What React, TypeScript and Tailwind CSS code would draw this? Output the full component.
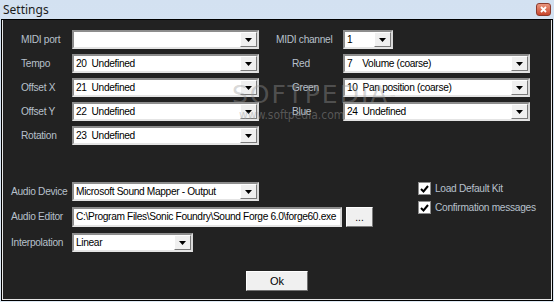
import React from 'react';

const font = { fontFamily: '"Liberation Sans", Arial, sans-serif' };

const Arrow = () => (
  <svg width="7" height="4" viewBox="0 0 7 4">
    <path d="M0 0h7L3.5 4z" fill="#000" />
  </svg>
);

const DropBtn = () => (
  <div className="w-[17px] h-full flex items-center justify-center bg-[#f0f0f0] border border-t-white border-l-white border-r-[#7a7a7a] border-b-[#7a7a7a]">
    <Arrow />
  </div>
);

const Combo = ({ w, value }: { w: string; value: string }) => (
  <div className={`${w} h-[19px] flex bg-white border-2 border-t-[#8d8d8d] border-l-[#8d8d8d] border-r-[#d8d8d8] border-b-[#e4e4e4]`}>
    <div className="flex-1 pl-[2px] text-[10.2px] tracking-[-0.35px] leading-[15px] text-black whitespace-pre">{value}</div>
    <DropBtn />
  </div>
);

const Label = ({ w, children, indent }: { w: string; children: React.ReactNode; indent?: string }) => (
  <div className={`${w} ${indent ?? ''} text-[10.2px] tracking-[-0.3px] text-[#b7c0cb] whitespace-nowrap`}>{children}</div>
);

const Check = ({ label }: { label: string }) => (
  <div className="flex items-center gap-[4px] h-[13px]">
    <div className="w-[13px] h-[13px] bg-white border border-[#8d8d8d] flex items-center justify-center">
      <svg width="9" height="8" viewBox="0 0 9 8">
        <path d="M1 4l2.5 2.5L8 1" stroke="#000" strokeWidth="2" fill="none" />
      </svg>
    </div>
    <span className="text-[10.2px] tracking-[-0.3px] text-[#b7c0cb]">{label}</span>
  </div>
);

const rows: [string, string, string, string][] = [
  ['MIDI port', '', 'MIDI channel', '1'],
  ['Tempo', '20  Undefined', 'Red', '7    Volume (coarse)'],
  ['Offset X', '21  Undefined', 'Green', '10  Pan position (coarse)'],
  ['Offset Y', '22  Undefined', 'Blue', '24  Undefined'],
  ['Rotation', '23  Undefined', '', ''],
];

export default function App() {
  return (
    <div className="w-[554px] h-[302px] flex flex-col bg-gradient-to-b from-[#d3e1f1] to-[#dde8f4]" style={font}>
      <div className="h-[19px] flex items-start justify-between">
        <span className="pl-[3px] pt-[1px] text-[12px] text-[#1b1b1b]" style={{ fontFamily: '"Noto Sans", "Open Sans", sans-serif' }}>Settings</span>
        <div className="mt-[3px] mr-[3px] w-[15px] h-[13px] rounded-[3px] bg-gradient-to-b from-[#e9967f] to-[#c8432a] border border-[#8c3a2c] flex items-center justify-center">
          <svg width="7" height="7" viewBox="0 0 7 7">
            <path d="M1 1l5 5M6 1L1 6" stroke="#fff" strokeWidth="1.8" />
          </svg>
        </div>
      </div>
      <div className="flex-1 mx-[1px] mb-[1px] border border-black">
        <div className="relative h-full border-r border-b border-l border-[#e6e6e6] bg-[#222222] flex flex-col">
          <div className="flex flex-col gap-[5px] pt-[10px] pl-[18px]">
            {rows.map(([l, lv, r, rv]) => (
              <div key={l} className="flex items-center">
                <Label w="w-[51px]">{l}</Label>
                <Combo w="w-[187px]" value={lv} />
                {r && (
                  <>
                    <Label w="w-[67px]" indent={r === 'MIDI channel' ? 'ml-[17px]' : 'ml-[17px] pl-[16px]'}>{r}</Label>
                    <Combo w={r === 'MIDI channel' ? 'w-[50px]' : 'w-[187px]'} value={rv} />
                  </>
                )}
              </div>
            ))}
          </div>

          <div className="flex pl-[8px] mt-[37px]">
            <div className="flex flex-col gap-[6px]">
              <div className="flex items-center">
                <Label w="w-[61px]">Audio Device</Label>
                <Combo w="w-[187px]" value="Microsoft Sound Mapper - Output" />
              </div>
              <div className="flex items-center">
                <Label w="w-[61px]">Audio Editor</Label>
                <div className="w-[270px] h-[20px] bg-white border-2 border-t-[#8d8d8d] border-l-[#8d8d8d] border-r-[#d8d8d8] border-b-[#e4e4e4] pl-[2px] text-[10.2px] tracking-[-0.35px] leading-[16px] text-black whitespace-nowrap overflow-hidden">
                  C:\Program Files\Sonic Foundry\Sound Forge 6.0\forge60.exe
                </div>
                <div className="ml-[4px] w-[27px] h-[20px] bg-[#f0f0f0] border border-t-white border-l-white border-r-[#7a7a7a] border-b-[#7a7a7a] flex items-center justify-center text-[10px] text-black">
                  ...
                </div>
              </div>
              <div className="flex items-center">
                <Label w="w-[61px]">Interpolation</Label>
                <Combo w="w-[121px]" value="Linear" />
              </div>
            </div>
            <div className="ml-[45px] flex flex-col gap-[6px]">
              <Check label="Load Default Kit" />
              <Check label="Confirmation messages" />
            </div>
          </div>

          <div className="flex justify-center mt-[19px]">
            <div className="w-[62px] h-[20px] bg-[#f0f0f0] border border-t-white border-l-white border-r-[#6f6f6f] border-b-[#6f6f6f] flex items-center justify-center text-[11px] text-black">
              Ok
            </div>
          </div>

          <div className="absolute left-[229px] top-[56px] text-[25px] tracking-[2px] text-[#9a9a9a]/40 pointer-events-none" style={{ fontFamily: '"DejaVu Sans", sans-serif' }}>
            SOFTPEDIA<sup className="text-[7px]">™</sup>
          </div>
          <div className="absolute left-[236px] top-[86px] text-[12px] text-[#9a9a9a]/45 pointer-events-none" style={{ fontFamily: '"DejaVu Sans Condensed", sans-serif' }}>
            www.softpedia.com
          </div>
        </div>
      </div>
    </div>
  );
}
